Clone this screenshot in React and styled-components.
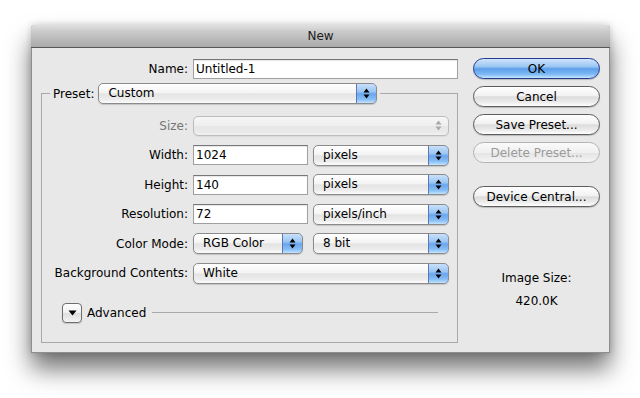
import React from 'react'
import styled, { createGlobalStyle, css } from 'styled-components'

const GlobalStyle = createGlobalStyle`
  html, body {
    margin: 0;
    background: #fff;
  }
  body {
    font-family: 'DejaVu Sans', 'Liberation Sans', sans-serif;
    font-size: 12px;
    color: #000;
  }
`

const StyledPage = styled.div`
  box-sizing: border-box;
  width: 640px;
  height: 398px;
  padding: 25px 0 0 31px;
  overflow: hidden;
`
const StyledWindow = styled.div`
  box-sizing: border-box;
  display: flex;
  flex-direction: column;
  width: 579px;
  height: 328px;
  border: 1px solid #8e8e8e;
  border-top: none;
  border-radius: 4px 4px 0 0;
  background: #e8e8e8;
  box-shadow: 0 16px 24px rgba(0, 0, 0, 0.55), 0 0 7px rgba(0, 0, 0, 0.18);
`
const StyledTitleBar = styled.div`
  display: flex;
  justify-content: center;
  align-items: center;
  height: 22px;
  margin: 0 -1px;
  border-bottom: 1px solid #575757;
  border-radius: 4px 4px 0 0;
  background: linear-gradient(#e0e0e0, #cacaca 30%, #a9a9a9 100%);
  color: #1c1c1c;
  font-size: 12px;
`
const StyledBody = styled.div`
  display: flex;
  padding: 11px 9px 0;
`
const StyledForm = styled.div`
  display: flex;
  flex-direction: column;
  width: 417px;
`
const StyledNameRow = styled.div`
  display: grid;
  grid-template-columns: 147px 265px;
  column-gap: 5px;
  align-items: center;
  height: 20px;
`
const StyledLabel = styled.span`
  color: ${({ theme }) => (theme.dim ? '#767676' : '#000')};
  text-align: right;
  white-space: nowrap;
`
const StyledGroup = styled.fieldset`
  box-sizing: border-box;
  width: 417px;
  min-width: 0;
  margin: 4px 0 0;
  padding: 11px 0 19px;
  border: 1px solid #a9a9a9;
`
const StyledLegend = styled.legend`
  display: flex;
  align-items: center;
  gap: 4px;
  margin-left: 8px;
  padding: 0 3px;
`
const StyledFields = styled.div`
  display: grid;
  grid-template-columns: 146px 256px;
  grid-auto-rows: 21px;
  column-gap: 5px;
  row-gap: 8.6px;
  align-items: center;
`
const StyledControls = styled.div`
  display: flex;
  align-items: center;
  gap: ${({ theme }) => theme.gap || 5}px;
`
const StyledInput = styled.input`
  box-sizing: border-box;
  width: ${({ theme }) => theme.width}px;
  height: 20px;
  margin: 0;
  padding: 0 2px;
  border: 1px solid #a0a0a0;
  border-top-color: #777;
  background: #fff;
  box-shadow: inset 0 1px 1px rgba(0, 0, 0, 0.1);
  color: #000;
  font: inherit;
  outline: none;
`
const StyledSelect = styled.div`
  box-sizing: border-box;
  display: flex;
  width: ${({ theme }) => theme.width}px;
  height: ${({ theme }) => (theme.disabled ? 20 : 21)}px;
  border: 1px solid ${({ theme }) => (theme.disabled ? '#bcbcbc' : '#8b8b8b')};
  border-radius: 5px;
  background: ${({ theme }) =>
    theme.disabled
      ? 'linear-gradient(#f6f6f6, #eeeeee 50%, #e6e6e6 51%, #eaeaea 85%, #f2f2f2)'
      : 'linear-gradient(#ffffff, #f4f4f4 45%, #e4e4e4 52%, #ececec 80%, #fbfbfb)'};
  box-shadow: 0 1px 1px rgba(0, 0, 0, ${({ theme }) => (theme.disabled ? 0.06 : 0.16)});
  overflow: hidden;
`
const StyledSelectValue = styled.span`
  flex: 1;
  padding-left: 9px;
  line-height: 19px;
  white-space: nowrap;
`
const StyledStepper = styled.span`
  display: flex;
  justify-content: center;
  align-items: center;
  width: 19px;
  ${({ theme }) =>
    theme.disabled
      ? css`
          color: #a8a8a8;
        `
      : css`
          margin: -1px -1px -1px 0;
          border: 1px solid #5a78b5;
          border-radius: 0 5px 5px 0;
          background: linear-gradient(
            #c9e0fa,
            #9cc6f3 40%,
            #6aa6ee 52%,
            #86bdf5 80%,
            #c4e3ff
          );
          color: #000;
        `}
`
const StyledAdvanced = styled.div`
  display: flex;
  align-items: center;
  margin-top: 19px;
  padding: 0 19px 0 20px;
`
const StyledDisclosure = styled.span`
  box-sizing: border-box;
  display: flex;
  justify-content: center;
  align-items: center;
  width: 20px;
  height: 20px;
  margin-right: 5px;
  border: 1px solid #6e6e6e;
  border-radius: 4px;
  background: linear-gradient(#ffffff, #f0f0f0 50%, #dedede 52%, #f4f4f4);
  box-shadow: 0 1px 1px rgba(0, 0, 0, 0.15);
`
const StyledRule = styled.span`
  flex: 1;
  height: 1px;
  margin-left: 6px;
  background: #a9a9a9;
`
const StyledSide = styled.div`
  display: flex;
  flex-direction: column;
  gap: 7px;
  width: 128px;
  margin: -1px 0 0 15px;
`
const StyledButton = styled.button`
  box-sizing: border-box;
  height: 21px;
  margin: ${({ theme }) => (theme.spaced ? '16px 0 0' : 0)};
  padding: 0;
  border: 1px solid #5c5c5c;
  border-radius: 11px;
  background: linear-gradient(#ffffff, #f2f2f2 45%, #dcdcdc 52%, #ececec 80%, #ffffff);
  box-shadow: 0 1px 1px rgba(0, 0, 0, 0.2);
  color: #000;
  font: inherit;
  ${({ theme }) =>
    theme.primary &&
    css`
      border-color: #233b8c;
      background: linear-gradient(
        #cfe4fb,
        #9cc6f3 40%,
        #5d9fea 52%,
        #7cb9f4 80%,
        #c6e6ff
      );
    `}
  ${({ theme }) =>
    theme.disabled &&
    css`
      border-color: #b4b4b4;
      background: linear-gradient(#fafafa, #f0f0f0 50%, #e4e4e4 52%, #f4f4f4);
      box-shadow: none;
      color: #9b9b9b;
    `}
`
const StyledInfo = styled.div`
  margin-top: 53px;
  line-height: 23px;
  text-align: center;
`

const Arrows = () => (
  <svg width="7" height="11" viewBox="0 0 7 11">
    <path d="M0.5 4.5L3.5 0.5L6.5 4.5Z" fill="currentColor" />
    <path d="M0.5 6.5L3.5 10.5L6.5 6.5Z" fill="currentColor" />
  </svg>
)

const Select = ({ value = '', width, disabled = false }) => (
  <StyledSelect theme={{ width, disabled }}>
    <StyledSelectValue>{value}</StyledSelectValue>
    <StyledStepper theme={{ disabled }}>
      <Arrows />
    </StyledStepper>
  </StyledSelect>
)

const Input = ({ value, width }) => (
  <StyledInput theme={{ width }} value={value} readOnly />
)

const App = () => (
  <StyledPage>
    <GlobalStyle />
    <StyledWindow>
      <StyledTitleBar>New</StyledTitleBar>
      <StyledBody>
        <StyledForm>
          <StyledNameRow>
            <StyledLabel>Name:</StyledLabel>
            <Input value="Untitled-1" width={265} />
          </StyledNameRow>
          <StyledGroup>
            <StyledLegend>
              <span>Preset:</span>
              <Select value="Custom" width={279} />
            </StyledLegend>
            <StyledFields>
              <StyledLabel theme={{ dim: true }}>Size:</StyledLabel>
              <Select width={256} disabled />

              <StyledLabel>Width:</StyledLabel>
              <StyledControls>
                <Input value="1024" width={115} />
                <Select value="pixels" width={136} />
              </StyledControls>

              <StyledLabel>Height:</StyledLabel>
              <StyledControls>
                <Input value="140" width={115} />
                <Select value="pixels" width={136} />
              </StyledControls>

              <StyledLabel>Resolution:</StyledLabel>
              <StyledControls>
                <Input value="72" width={115} />
                <Select value="pixels/inch" width={136} />
              </StyledControls>

              <StyledLabel>Color Mode:</StyledLabel>
              <StyledControls theme={{ gap: 10 }}>
                <Select value="RGB Color" width={110} />
                <Select value="8 bit" width={136} />
              </StyledControls>

              <StyledLabel>Background Contents:</StyledLabel>
              <Select value="White" width={256} />
            </StyledFields>
            <StyledAdvanced>
              <StyledDisclosure>
                <svg width="9" height="6" viewBox="0 0 9 6">
                  <path d="M0.5 0.5H8.5L4.5 5.5Z" fill="#000" />
                </svg>
              </StyledDisclosure>
              <span>Advanced</span>
              <StyledRule />
            </StyledAdvanced>
          </StyledGroup>
        </StyledForm>
        <StyledSide>
          <StyledButton theme={{ primary: true }}>OK</StyledButton>
          <StyledButton>Cancel</StyledButton>
          <StyledButton>Save Preset...</StyledButton>
          <StyledButton theme={{ disabled: true }}>Delete Preset...</StyledButton>
          <StyledButton theme={{ spaced: true }}>Device Central...</StyledButton>
          <StyledInfo>
            <div>Image Size:</div>
            <div>420.0K</div>
          </StyledInfo>
        </StyledSide>
      </StyledBody>
    </StyledWindow>
  </StyledPage>
)

export default App
